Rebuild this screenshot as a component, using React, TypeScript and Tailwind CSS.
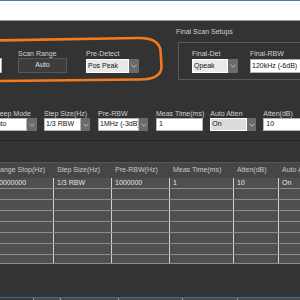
import type { ReactNode } from 'react';

function Chevron() {
  return (
    <svg width="6" height="4" viewBox="0 0 6 4">
      <path d="M0.5 0.8 L3 3.2 L5.5 0.8" stroke="#c4c4c4" strokeWidth="0.9" fill="none" />
    </svg>
  );
}

interface SelectBoxProps {
  value: string;
  boxClass: string;
  heightClass: string;
  fillClass?: string;
  buttonClass?: string;
}

function SelectBox({ value, boxClass, heightClass, fillClass = 'bg-white border-[#b4b4b4]', buttonClass = 'w-[10px]' }: SelectBoxProps) {
  return (
    <div className={`flex ${heightClass}`}>
      <div className={`${boxClass} ${fillClass} border flex items-center pl-[1px] overflow-hidden whitespace-nowrap text-[#111]`}>
        {value}
      </div>
      <div className={`${buttonClass} bg-[#6b6b6b] flex items-center justify-center`}>
        <Chevron />
      </div>
    </div>
  );
}

function Field({ label, className = '', children }: { label: string; className?: string; children: ReactNode }) {
  return (
    <div className={`flex flex-col ${className}`}>
      <div className="h-[8px] leading-[8px] whitespace-nowrap text-[#d0d0d0]">{label}</div>
      {children}
    </div>
  );
}

const colClasses = ['w-[62px] shrink-0', 'w-[58px] shrink-0', 'w-[58px] shrink-0', 'w-[64px] shrink-0', 'w-[45px] shrink-0', 'w-[60px] shrink-0'];
const headers = ['Range Stop(Hz)', 'Step Size(Hz)', 'Pre-RBW(Hz)', 'Meas Time(ms)', 'Atten(dB)', 'Auto Atten'];
const firstRow = ['10000000', '1/3 RBW', '1000000', '1', '10', 'On'];
const rowHeights = ['h-[11px]', 'h-[11px]', 'h-[11px]', 'h-[11px]', 'h-[11px]', 'h-[11px]', 'h-[11px]', 'h-[9px]'];

export default function App() {
  return (
    <div className="relative w-[300px] h-[300px] overflow-hidden flex flex-col bg-[#333333] text-[7px] font-['Liberation_Sans',Arial,sans-serif]">
      <div className="h-[1px] bg-[#4a78ad] shrink-0" />
      <div className="h-[19px] bg-white shrink-0" />
      <div className="h-[1px] bg-[#9a9a9a] shrink-0" />

      {/* scan settings */}
      <div className="flex h-[79px] shrink-0">
        <div className="flex items-start mt-[29px]">
          <Field label="" className="ml-[-40px]">
            <div className="w-[42px] h-[15px] bg-white border border-[#b4b4b4]" />
          </Field>
          <Field label="Scan Range" className="ml-[16px]">
            <div className="w-[49px] h-[15px] bg-[#3d3d3d] border border-[#575757] flex items-center justify-center text-[#e2e2e2]">
              Auto
            </div>
          </Field>
          <Field label="Pre-Detect" className="ml-[19px]">
            <SelectBox value="Pos Peak" boxClass="w-[43px]" heightClass="h-[14px] mt-[1px]" fillClass="bg-[#e8e8e8] border-white" />
          </Field>
        </div>
        <div className="flex flex-col ml-[37px] mt-[7px]">
          <div className="h-[8px] leading-[8px] whitespace-nowrap text-[#cfcfcf]">Final Scan Setups</div>
          <div className="ml-[2px] mt-[6px] w-[140px] h-[38px] border border-[#5a5a5a] flex items-start pl-[13px] pt-[7px]">
            <Field label="Final-Det">
              <SelectBox value="Qpeak" boxClass="w-[36px]" heightClass="h-[14px] mt-[1px]" fillClass="bg-[#ebebeb] border-white" />
            </Field>
            <Field label="Final-RBW" className="ml-[12px]">
              <div className="w-[60px] h-[14px] mt-[1px] bg-white border border-[#b4b4b4] flex items-center pl-[1px] whitespace-nowrap text-[#111]">
                120kHz (-6dB)
              </div>
            </Field>
          </div>
        </div>
      </div>

      {/* sweep settings */}
      <div className="flex items-start h-[41px] pt-[10px] border-b border-[#282828] shrink-0">
        <Field label="Sweep Mode" className="ml-[-10px]">
          <SelectBox value="Auto" boxClass="w-[37px]" heightClass="h-[13px]" />
        </Field>
        <Field label="Step Size(Hz)" className="ml-[7px]">
          <SelectBox value="1/3 RBW" boxClass="w-[37px]" heightClass="h-[13px]" buttonClass="w-[9px]" />
        </Field>
        <Field label="Pre-RBW" className="ml-[8px]">
          <SelectBox value="1MHz (-3dB)" boxClass="w-[41px]" heightClass="h-[13px]" buttonClass="w-[9px]" />
        </Field>
        <Field label="Meas Time(ms)" className="ml-[8px]">
          <div className="w-[47px] h-[13px] bg-white border border-[#b4b4b4] flex items-center pl-[2px] text-[#111]">1</div>
        </Field>
        <Field label="Auto Atten" className="ml-[6px]">
          <SelectBox value="On" boxClass="w-[37px]" heightClass="h-[13px]" buttonClass="w-[9px]" fillClass="bg-[#dcdcdc] border-white" />
        </Field>
        <Field label="Atten(dB)" className="ml-[7px]">
          <div className="w-[50px] h-[13px] bg-white border border-[#b4b4b4] flex items-center pl-[2px] text-[#111]">10</div>
        </Field>
      </div>

      {/* final scan table */}
      <div className="mt-[21px] ml-[-9px] flex flex-col shrink-0">
        <div className="flex h-[16px] bg-[#464646] border-t border-[#575757]">
          {headers.map((h, i) => (
            <div key={h} className={`${colClasses[i]} pl-[4px] flex items-center whitespace-nowrap overflow-hidden text-[#c8c8c8]`}>
              {h}
            </div>
          ))}
        </div>
        {rowHeights.map((rh, r) => (
          <div key={r} className={`flex ${rh} bg-[#4f4f4f] border-b border-[#8e8e8e]`}>
            {colClasses.map((c, i) => (
              <div
                key={i}
                className={`${c} flex items-center whitespace-nowrap overflow-hidden text-[#e6e6e6] ${i === 0 ? 'pl-[4px]' : 'pl-[3px] border-l border-[#d0d0d0]'}`}
              >
                {r === 0 ? firstRow[i] : ''}
              </div>
            ))}
          </div>
        ))}
      </div>

      <div className="flex-1" />
      <div className="h-[1px] bg-[#2f6bb0] shrink-0" />
      <div className="flex h-[2px] shrink-0 bg-[#4a4a4a]">
        <div className="w-[33px] bg-[#3a3a3a]" />
        <div className="w-[27px] border-l border-[#a0a0a0]" />
        <div className="w-[58px] border-l border-[#a0a0a0]" />
        <div className="w-[64px] border-l border-[#a0a0a0]" />
        <div className="w-[55px] border-l border-[#a0a0a0]" />
        <div className="flex-1 border-l border-[#a0a0a0]" />
      </div>

      {/* annotation */}
      <svg className="absolute left-0 top-0 pointer-events-none" width="300" height="100" viewBox="0 0 300 100">
        <path
          d="M -5 40.5 L 138 38 Q 158 37.5 160.5 50 L 161.5 67 Q 161 80 138 79.5 L -5 81"
          stroke="#f47a1f"
          strokeWidth="2.6"
          fill="none"
          strokeLinejoin="round"
        />
      </svg>
    </div>
  );
}
